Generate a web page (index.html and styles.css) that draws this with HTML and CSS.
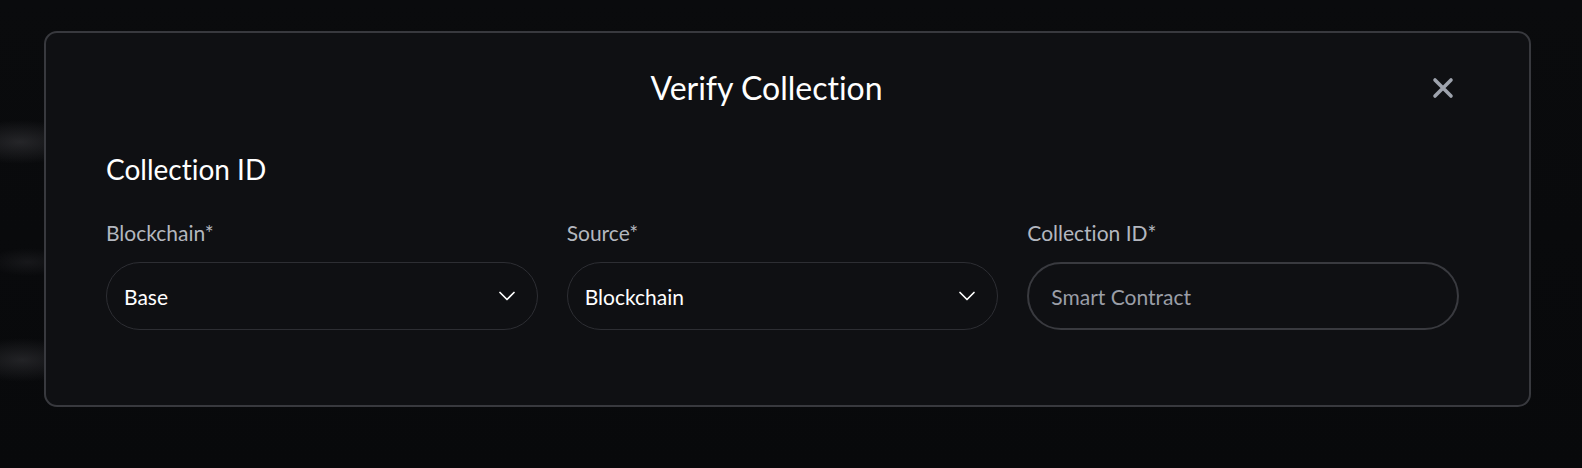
FILE: index.html
```html
<!DOCTYPE html>
<html lang="en">
<head>
<meta charset="utf-8">
<title>Verify Collection</title>
<link rel="stylesheet" href="styles.css">
</head>
<body>
<div class="backdrop"></div>
<div class="modal">
  <div class="modal-header">
    <h2 class="modal-title">Verify Collection</h2>
    <button class="close-btn" aria-label="Close">
      <svg width="22" height="22" viewBox="0 0 22 22" fill="none">
        <path d="M3 3 L19 19 M19 3 L3 19" stroke="#9ea3ad" stroke-width="3.6" stroke-linecap="round"/>
      </svg>
    </button>
  </div>
  <h3 class="section-title">Collection ID</h3>
  <div class="fields">
    <div class="field">
      <label class="field-label">Blockchain*</label>
      <div class="select">
        <span class="select-value">Base</span>
        <svg class="chevron" width="18" height="10" viewBox="0 0 18 10" fill="none">
          <path d="M2 1.5 L9 8.5 L16 1.5" stroke="#ffffff" stroke-width="1.7" stroke-linecap="round" stroke-linejoin="round"/>
        </svg>
      </div>
    </div>
    <div class="field">
      <label class="field-label">Source*</label>
      <div class="select">
        <span class="select-value">Blockchain</span>
        <svg class="chevron" width="18" height="10" viewBox="0 0 18 10" fill="none">
          <path d="M2 1.5 L9 8.5 L16 1.5" stroke="#ffffff" stroke-width="1.7" stroke-linecap="round" stroke-linejoin="round"/>
        </svg>
      </div>
    </div>
    <div class="field">
      <label class="field-label">Collection ID*</label>
      <input class="text-input" type="text" placeholder="Smart Contract">
    </div>
  </div>
</div>
</body>
</html>
```

FILE: styles.css
```css
* {
  box-sizing: border-box;
}

html, body {
  margin: 0;
  padding: 0;
}

body {
  width: 1582px;
  height: 468px;
  overflow: hidden;
  background: #08090b;
  font-family: "Lato", "Noto Sans", sans-serif;
  font-variant-ligatures: none;
  position: relative;
  padding-top: 31px;
  padding-left: 44px;
}

.backdrop {
  position: absolute;
  inset: 0;
  background:
    radial-gradient(ellipse 60px 22px at 20px 142px, rgba(60, 60, 64, 0.55), rgba(60, 60, 64, 0) 100%),
    radial-gradient(ellipse 40px 14px at 28px 262px, rgba(50, 50, 54, 0.35), rgba(50, 50, 54, 0) 100%),
    radial-gradient(ellipse 60px 22px at 22px 360px, rgba(60, 60, 64, 0.5), rgba(60, 60, 64, 0) 100%),
    linear-gradient(180deg, #0a0b0d 0%, #08090b 100%);
  z-index: 0;
}

.modal {
  position: relative;
  z-index: 1;
  width: 1487px;
  height: 376px;
  background: #0f1013;
  border: 2px solid #38393e;
  border-radius: 13px;
  padding: 35px 70px 0 60px;
  font-variant-ligatures: none;
}

.modal-header {
  display: flex;
  align-items: center;
  height: 40px;
}

.modal-title {
  flex: 1;
  margin: 0;
  text-align: center;
  font-size: 32px;
  font-weight: 400;
  line-height: 40px;
  color: #ffffff;
}

.close-btn {
  width: 32px;
  height: 32px;
  padding: 0;
  border: 0;
  background: transparent;
  display: flex;
  align-items: center;
  justify-content: center;
  cursor: pointer;
}

.section-title {
  margin: 43px 0 0 0;
  font-size: 28px;
  font-weight: 400;
  line-height: 36px;
  color: #ffffff;
}

.fields {
  display: grid;
  grid-template-columns: repeat(3, 1fr);
  column-gap: 29px;
  margin-top: 32px;
}

.field {
  display: flex;
  flex-direction: column;
}

.field-label {
  font-size: 21px;
  line-height: 28px;
  color: #b3b7bf;
  margin-bottom: 15px;
}

.select {
  height: 68px;
  border: 1px solid #2d2e33;
  border-radius: 34px;
  display: flex;
  align-items: center;
  justify-content: space-between;
  padding: 0 21px 0 17px;
}

.select-value {
  font-size: 21px;
  color: #ffffff;
}

.chevron {
  display: block;
}

.text-input {
  height: 68px;
  border: 2px solid #393a3f;
  border-radius: 34px;
  background: transparent;
  padding: 0 22px;
  font-family: "Lato", "Noto Sans", sans-serif;
  font-variant-ligatures: none;
  font-size: 21px;
  color: #ffffff;
  outline: none;
  width: 100%;
}

.text-input::placeholder {
  color: #9a9ea7;
}
```
